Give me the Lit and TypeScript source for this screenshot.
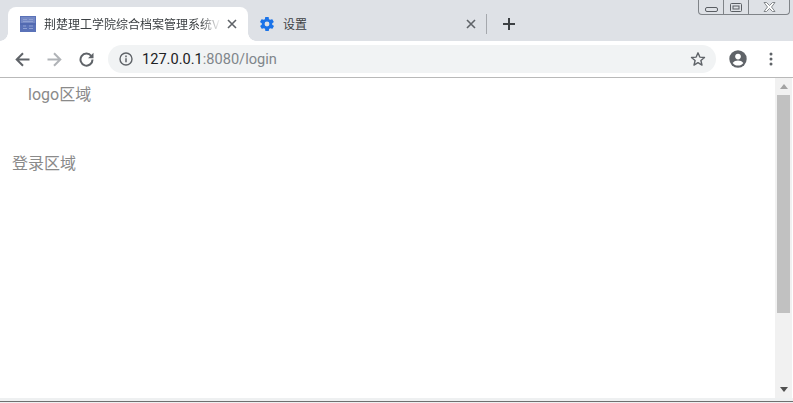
import { LitElement, html, css } from "lit";
import { customElement } from "lit/decorators.js";

@customElement("app-root")
export class AppRoot extends LitElement {
  static styles = css`
    :host { display: block; width: 793px; height: 403px; overflow: hidden; position: relative; background: #fff;
      font-family: Roboto, "Noto Sans CJK SC", sans-serif; }
    .strip { height: 41px; background: #dee1e6; display: flex; align-items: flex-end; padding-left: 8px; box-sizing: border-box; }
    .tab { height: 34px; display: flex; align-items: center; box-sizing: border-box; flex: none; font-size: 12px; color: #3c4043; }
    .tab.active { width: 240px; background: #fff; border-radius: 8px 8px 0 0; padding: 0 11px 0 12px; position: relative; }
    .tab.active::before, .tab.active::after { content: ""; position: absolute; bottom: 0; width: 8px; height: 8px; }
    .tab.active::before { left: -8px; background: radial-gradient(circle at 0 0, #dee1e6 7.5px, #fff 8px); }
    .tab.active::after { right: -8px; background: radial-gradient(circle at 100% 0, #dee1e6 7.5px, #fff 8px); }
    .tab.other { width: 238px; padding: 0 10px 0 12px; }
    .fav { width: 16px; height: 16px; flex: none; margin-right: 8px; display: block; }
    .other .fav { width: 14px; height: 14px; margin-right: 9px; }
    .title { flex: 1; overflow: hidden; white-space: nowrap; min-width: 0; margin-top: -2px; color: #3c4043; }
    .active .title { -webkit-mask-image: linear-gradient(90deg, #000 88%, transparent 100%); mask-image: linear-gradient(90deg, #000 88%, transparent 100%); }
    .close { width: 10px; height: 10px; flex: none; margin-left: 6px; display: block; }
    .sep { width: 1px; height: 20px; background: #a5a8ad; margin-bottom: 7px; flex: none; }
    .plus { width: 12px; height: 12px; flex: none; margin: 0 0 11px 16px; display: block; }

    .toolbar { height: 37px; box-sizing: border-box; background: #fff; border-bottom: 1px solid #b9b9b9; display: flex; align-items: center; padding: 0 0 0 15px; }
    .nav { width: 15px; height: 15px; flex: none; display: block; }
    .nav.fwd { margin-left: 17px; }
    .nav.rel { margin-left: 17px; margin-right: 14px; }
    .omni { width: 608px; height: 28px; margin-top: -1px; flex: none; border-radius: 14px; background: #f1f3f4; display: flex; align-items: center; padding: 0 10px 0 11px; box-sizing: border-box; }
    .info { width: 14px; height: 14px; flex: none; margin-right: 9px; display: block; }
    .url { flex: 1; font-size: 14.6px; color: #80868b; white-space: nowrap; }
    .url b { font-weight: 400; color: #202124; }
    .star { width: 16px; height: 16px; flex: none; display: block; }
    .acct { width: 18px; height: 18px; flex: none; margin-left: 13px; display: block; }
    .dots { width: 4px; height: 14px; flex: none; margin-left: 22px; display: block; }

    .main { display: flex; height: 320px; }
    .page { flex: 1; min-width: 0; font-size: 16px; color: #8a8a8a; line-height: 20px; }
    .logo { padding: 7px 0 0 28px; }
    .login { padding: 49px 0 0 12px; }
    .sb { width: 17px; background: #f1f1f1; flex: none; margin-right: 1px; display: flex; flex-direction: column; align-items: stretch; }
    .arrow { height: 17px; display: flex; align-items: center; justify-content: center; flex: none; }
    .arrow svg { width: 8px; height: 5px; display: block; }
    .thumb { height: 218px; background: #c1c1c1; flex: none; margin: 0 2px; }
    .gap { flex: 1; }
    .bottom { height: 5px; background: #eef0f1; box-sizing: border-box; padding-top: 3px; }
    .bottom::before { content: ""; display: block; height: 1px; background: #6f6f6f; }

    .win { position: absolute; top: 0; left: 698px; width: 92px; height: 15px; box-sizing: border-box; border: 1px solid #7f8388; border-top: none; border-radius: 0 0 4px 4px; display: flex; background: #dee1e6; }
    .win > div { display: flex; align-items: center; justify-content: center; box-sizing: border-box; }
    .w1 { width: 25px; border-right: 1px solid #7f8388; padding-top: 5px; }
    .w2 { width: 25px; border-right: 1px solid #7f8388; }
    .w3 { flex: 1; }
  `;

  render() {
    return html`
      <div class="strip">
        <div class="tab active">
          <svg class="fav" viewBox="0 0 16 16">
            <rect width="16" height="16" fill="#5a72b8"/>
            <rect x="1" y="1" width="14" height="6" fill="#7488c4"/>
            <path d="M3 3.500h4M9 3.500h4M3 5.500h10M3 10h3M9 10h4M3 12.500h4M9 12.500h4" stroke="#8ea0d2" stroke-width="1"/>
            <rect y="7.500" width="16" height="1" fill="#4a62aa"/>
          </svg>
          <span class="title">荆楚理工学院综合档案管理系统V1.0</span>
          <svg class="close" viewBox="0 0 10 10"><path d="M1 1l8 8M9 1l-8 8" stroke="#5f6368" stroke-width="1.600"/></svg>
        </div>
        <div class="tab other">
          <svg class="fav" viewBox="2 2 20 20"><path fill="#1a73e8" fill-rule="evenodd" d="M19.400 13c.1-.3.1-.7.1-1s0-.7-.1-1l2.100-1.600c.2-.2.2-.4.1-.6l-2-3.500c-.1-.2-.4-.3-.6-.2l-2.500 1c-.5-.4-1.100-.7-1.700-1l-.4-2.600c0-.3-.2-.5-.5-.5h-4c-.3 0-.5.2-.5.4l-.4 2.700c-.6.2-1.200.6-1.700 1l-2.500-1c-.2-.1-.5 0-.6.2l-2 3.500c-.1.2-.1.5.1.6L4.600 11c-.1.3-.1.7-.1 1s0 .7.1 1l-2.100 1.600c-.2.2-.2.4-.1.6l2 3.500c.1.2.4.3.6.2l2.500-1c.5.4 1.100.7 1.700 1l.4 2.600c0 .3.2.5.5.5h4c.3 0 .5-.2.5-.4l.4-2.700c.6-.2 1.200-.6 1.700-1l2.500 1c.2.1.5 0 .6-.2l2-3.500c.1-.2.1-.5-.1-.6L19.400 13zM12 15.500a3.500 3.500 0 1 1 0-7 3.500 3.500 0 0 1 0 7z"/></svg>
          <span class="title">设置</span>
          <svg class="close" viewBox="0 0 10 10"><path d="M1 1l8 8M9 1l-8 8" stroke="#5f6368" stroke-width="1.600"/></svg>
        </div>
        <div class="sep"></div>
        <svg class="plus" viewBox="0 0 12 12"><path d="M6 0v12M0 6h12" stroke="#3c4043" stroke-width="2"/></svg>
      </div>
      <div class="toolbar">
        <svg class="nav" viewBox="0 0 15 15"><path d="M14.500 7.500H2M8 1.200L1.700 7.500 8 13.800" fill="none" stroke="#5f6368" stroke-width="2"/></svg>
        <svg class="nav fwd" viewBox="0 0 15 15"><path d="M.5 7.500H13M7 1.200l6.300 6.300L7 13.800" fill="none" stroke="#b0b3b7" stroke-width="2"/></svg>
        <svg class="nav rel" viewBox="0 0 15 15"><path d="M12.300 4A6 6 0 1 0 13.500 7.500" fill="none" stroke="#5f6368" stroke-width="2"/><path d="M14.500 .8v5.500H9z" fill="#5f6368"/></svg>
        <div class="omni">
          <svg class="info" viewBox="0 0 14 14"><circle cx="7" cy="7" r="6" fill="none" stroke="#5f6368" stroke-width="1.400"/><path d="M7 6.200v4M7 3.600v1.600" stroke="#5f6368" stroke-width="1.500"/></svg>
          <span class="url"><b>127.0.0.1</b>:8080/login</span>
          <svg class="star" viewBox="0 0 16 16"><path d="M8 1.800l1.800 4.300 4.700.4-3.600 3 1.100 4.600L8 11.700l-4 2.400 1.100-4.600-3.600-3 4.700-.4z" fill="none" stroke="#5f6368" stroke-width="1.400" stroke-linejoin="round"/></svg>
        </div>
        <svg class="acct" viewBox="0 0 18 18"><circle cx="9" cy="9" r="8.700" fill="#5f6368"/><circle cx="9" cy="6.600" r="2.800" fill="#fff"/><path d="M3.600 13c1.200-1.700 3.400-2.500 5.400-2.500s4.200.8 5.400 2.500C13.200 14.700 11.200 15.600 9 15.600S4.800 14.700 3.600 13z" fill="#fff"/></svg>
        <svg class="dots" viewBox="0 0 4 14"><circle cx="2" cy="2" r="1.500" fill="#5f6368"/><circle cx="2" cy="7" r="1.500" fill="#5f6368"/><circle cx="2" cy="12" r="1.500" fill="#5f6368"/></svg>
      </div>
      <div class="main">
        <div class="page">
          <div class="logo">logo区域</div>
          <div class="login">登录区域</div>
        </div>
        <div class="sb">
          <div class="arrow"><svg viewBox="0 0 8 5"><path d="M4 0l4 5H0z" fill="#a3a3a3"/></svg></div>
          <div class="thumb"></div>
          <div class="gap"></div>
          <div class="arrow"><svg viewBox="0 0 8 5"><path d="M0 0h8L4 5z" fill="#505050"/></svg></div>
        </div>
      </div>
      <div class="bottom"></div>
      <div class="win">
        <div class="w1"><svg width="13" height="5" viewBox="0 0 13 5"><rect x=".5" y=".5" width="12" height="4" rx="1.500" fill="none" stroke="#5a5e63"/></svg></div>
        <div class="w2"><svg width="12" height="9" viewBox="0 0 12 9"><rect x=".5" y=".5" width="11" height="8" rx="1" fill="none" stroke="#5a5e63"/><rect x="3" y="3" width="6" height="3" fill="none" stroke="#5a5e63"/></svg></div>
        <div class="w3"><svg width="13" height="10" viewBox="0 0 13 10"><path d="M1 .5h2.500L6.500 3.500 9.500.5H12L8.500 5 12 9.500H9.500L6.500 6.500 3.500 9.500H1L4.500 5z" fill="#fff" stroke="#6a6e73" stroke-width=".8"/></svg></div>
      </div>
    `;
  }
}
